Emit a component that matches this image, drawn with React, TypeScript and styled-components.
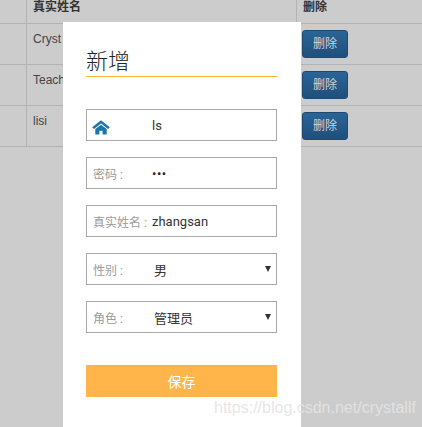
import React from "react";
import styled, { createGlobalStyle } from "styled-components";

const Global = createGlobalStyle`
  html, body { margin: 0; padding: 0; }
  body { width: 422px; height: 427px; overflow: hidden; background: #cccccc; font-family: "Liberation Sans", "Noto Sans CJK SC", sans-serif; }
`;

const Page = styled.div`
  position: relative;
  width: 422px;
  height: 427px;
  overflow: hidden;
  background: #cccccc;
`;

const Table = styled.div`
  display: flex;
  flex-direction: column;
  width: 422px;
`;

const Row = styled.div<{ $height: number }>`
  display: grid;
  grid-template-columns: 26px 270px 1fr;
  height: ${(p) => p.$height}px;
  border-bottom: 1px solid #b3b3b3;
  box-sizing: content-box;
`;

const HeadCell = styled.div<{ $divider?: boolean }>`
  border-left: ${(p) => (p.$divider ? "1px solid #b3b3b3" : "none")};
  padding: 0 0 0 ${(p) => (p.$divider ? "6px" : "0")};
  font-size: 12px;
  font-weight: 700;
  line-height: 15px;
  color: #333333;
`;

const Cell = styled.div<{ $divider?: boolean }>`
  border-left: ${(p) => (p.$divider ? "1px solid #b3b3b3" : "none")};
  padding: 7px 0 0 6px;
  font-size: 12px;
  line-height: 16px;
  color: #444444;
`;

const ActionCell = styled.div`
  padding: 6px 0 0 6px;
`;

const DeleteButton = styled.div`
  box-sizing: border-box;
  width: 46px;
  height: 28px;
  border: 1px solid #1d4a73;
  border-radius: 3px;
  background: linear-gradient(#2a6597, #1f4f7c);
  color: #d4d4d4;
  font-size: 12px;
  line-height: 26px;
  text-align: center;
`;

const Modal = styled.div`
  position: absolute;
  left: 63px;
  top: 22px;
  box-sizing: border-box;
  width: 238px;
  height: 405px;
  padding: 0 24px 0 23px;
  background: #ffffff;
  display: flex;
  flex-direction: column;
`;

const Title = styled.div`
  height: 55px;
  flex: none;
  box-sizing: border-box;
  margin-bottom: 32px;
  border-bottom: 1px solid #ffb133;
  padding-top: 22px;
  font-family: "Noto Sans CJK SC", sans-serif;
  font-size: 22px;
  font-weight: 300;
  line-height: 31px;
  color: #222222;
`;

const Fields = styled.div`
  display: flex;
  flex-direction: column;
  gap: 16px;
`;

const Field = styled.div`
  position: relative;
  box-sizing: border-box;
  height: 32px;
  border: 1px solid #a9a9a9;
  display: flex;
  align-items: center;
  padding-left: 6px;
`;

const Label = styled.div`
  width: 59px;
  flex: none;
  font-family: "Roboto", "Noto Sans CJK SC", sans-serif;
  font-size: 12px;
  color: #9b9b9b;
  white-space: nowrap;
`;

const Value = styled.div<{ $cjk?: boolean }>`
  font-family: "Roboto", "Noto Sans CJK SC", sans-serif;
  font-size: 13px;
  color: #333333;
  padding-left: ${(p) => (p.$cjk ? "2px" : "0")};
`;

const Dots = styled.div`
  font-family: "Roboto", sans-serif;
  font-size: 13px;
  letter-spacing: 0.5px;
  color: #222222;
`;

const Arrow = styled.span`
  position: absolute;
  right: 5px;
  top: 12px;
  width: 0;
  height: 0;
  border-left: 3px solid transparent;
  border-right: 3px solid transparent;
  border-top: 6px solid #333333;
`;

const Save = styled.div`
  margin-top: 32px;
  height: 32px;
  background: #ffb54a;
  color: #ffffff;
  font-family: "Noto Sans CJK SC", sans-serif;
  font-size: 14px;
  line-height: 32px;
  text-align: center;
`;

const Watermark = styled.div`
  position: absolute;
  left: 214px;
  bottom: 10px;
  font-family: "Liberation Sans", sans-serif;
  font-size: 16px;
  line-height: 18px;
  white-space: nowrap;
  color: rgba(228, 228, 228, 0.9);
`;

const HomeIcon = () => (
  <svg width="18" height="15" viewBox="0 0 18 15" style={{ display: "block", marginTop: 4, marginLeft: -1 }}>
    <path d="M9 0.3 L17.8 7.2 L16 9 L9 3.6 L2 9 L0.2 7.2 Z" fill="#1b75ad" />
    <path d="M3.3 9 L9 4.8 L14.7 9 V14.6 H10.6 V10.8 H7.4 V14.6 H3.3 Z" fill="#1b75ad" />
  </svg>
);

const rows = ["Cryst", "Teach", "lisi"];

export default function App() {
  return (
    <Page>
      <Global />
      <Table>
        <Row $height={23}>
          <HeadCell />
          <HeadCell $divider>真实姓名</HeadCell>
          <HeadCell $divider>删除</HeadCell>
        </Row>
        {rows.map((name) => (
          <Row $height={40} key={name}>
            <Cell />
            <Cell $divider>{name}</Cell>
            <ActionCell>
              <DeleteButton>删除</DeleteButton>
            </ActionCell>
          </Row>
        ))}
      </Table>
      <Modal>
        <Title>新增</Title>
        <Fields>
          <Field>
            <Label><HomeIcon /></Label>
            <Value>ls</Value>
          </Field>
          <Field>
            <Label>密码 :</Label>
            <Dots>•••</Dots>
          </Field>
          <Field>
            <Label>真实姓名 :</Label>
            <Value>zhangsan</Value>
          </Field>
          <Field>
            <Label>性别 :</Label>
            <Value $cjk>男</Value>
            <Arrow />
          </Field>
          <Field>
            <Label>角色 :</Label>
            <Value $cjk>管理员</Value>
            <Arrow />
          </Field>
        </Fields>
        <Save>保存</Save>
      </Modal>
      <Watermark>https://blog.csdn.net/crystallf</Watermark>
    </Page>
  );
}
